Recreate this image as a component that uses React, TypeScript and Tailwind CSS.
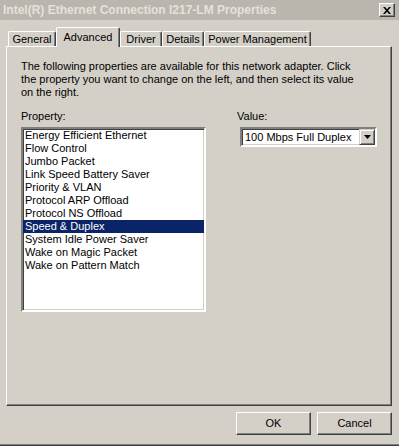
import React from "react";

const items = [
  "Energy Efficient Ethernet",
  "Flow Control",
  "Jumbo Packet",
  "Link Speed Battery Saver",
  "Priority & VLAN",
  "Protocol ARP Offload",
  "Protocol NS Offload",
  "Speed & Duplex",
  "System Idle Power Saver",
  "Wake on Magic Packet",
  "Wake on Pattern Match",
];

function Tab({ label, w, selected }: { label: string; w: string; selected?: boolean }) {
  if (selected) {
    return (
      <div
        className={`${w} h-[20px] mb-[-1px] relative z-10 bg-[#d4d0c8] border-t border-l border-white border-r border-r-[#404040] shadow-[inset_-1px_0_#808080] rounded-t-[2px] flex items-start justify-center pt-[3px] leading-[13px]`}
      >
        {label}
      </div>
    );
  }
  return (
    <div
      className={`${w} h-[15px] bg-[#d4d0c8] border-t border-l border-white border-r border-r-[#404040] shadow-[inset_-1px_0_#808080] rounded-t-[2px] flex items-start justify-center pt-[1px] leading-[13px]`}
    >
      {label}
    </div>
  );
}

export default function App() {
  return (
    <div className="w-[399px] h-[446px] bg-[#d4d0c8] overflow-hidden flex flex-col text-[11px] text-black font-['Liberation_Sans',Arial,sans-serif]">
      {/* Title bar */}
      <div className="h-[20px] bg-[#bab6ae] flex items-center justify-between pl-[3px] pr-[4px]">
        <span className="font-bold text-[12px] text-[#e4e2dc] leading-[20px]">
          Intel(R) Ethernet Connection I217-LM Properties
        </span>
        <div className="w-[16px] h-[14px] bg-[#d4d0c8] border-t border-l border-white border-r border-b border-r-[#404040] border-b-[#404040] shadow-[inset_-1px_-1px_#808080] flex items-center justify-center">
          <svg width="8" height="7" viewBox="0 0 8 7">
            <path d="M0 0h2l2 2.3L6 0h2L5 3.5 8 7H6L4 4.7 2 7H0l3-3.5z" fill="#000" />
          </svg>
        </div>
      </div>

      {/* Tabs */}
      <div className="pt-[7px] pl-[8px] h-[26px] flex items-end">
        <Tab label="General" w="w-[48px]" />
        <Tab label="Advanced" w="w-[64px]" selected />
        <Tab label="Driver" w="w-[42px]" />
        <Tab label="Details" w="w-[42px]" />
        <Tab label="Power Management" w="w-[107px]" />
      </div>

      {/* Panel */}
      <div className="ml-[6px] w-[386px] h-[360px] border-t border-l border-white border-r border-b border-r-[#404040] border-b-[#404040] shadow-[inset_-1px_-1px_#808080] pl-[14px] pt-[13px]">
        <p className="leading-[13px]">
          The following properties are available for this network adapter. Click
          <br />
          the property you want to change on the left, and then select its value
          <br />
          on the right.
        </p>
        <div className="flex mt-[11px]">
          <div className="w-[185px] flex flex-col">
            <div className="leading-[13px]">Property:</div>
            <div className="mt-[4px] w-[185px] h-[185px] bg-white border-2 border-t-[#808080] border-l-[#808080] border-r-white border-b-white shadow-[inset_1px_1px_#404040,inset_-1px_-1px_#d4d0c8] overflow-hidden">
              {items.map((it) => (
                <div
                  key={it}
                  className={`h-[13px] leading-[13px] pl-[2px] ${
                    it === "Speed & Duplex" ? "bg-[#0a246a] text-white" : ""
                  }`}
                >
                  {it}
                </div>
              ))}
            </div>
          </div>
          <div className="ml-[31px] flex flex-col">
            <div className="leading-[13px]">Value:</div>
            <div className="mt-[4px] ml-[3px] w-[137px] h-[20px] bg-white border-2 border-t-[#808080] border-l-[#808080] border-r-white border-b-white shadow-[inset_1px_1px_#404040,inset_-1px_-1px_#d4d0c8] flex items-center">
              <span className="flex-1 pl-[3px] leading-[16px]">100 Mbps Full Duplex</span>
              <div className="w-[16px] h-[16px] bg-[#d4d0c8] border-t border-l border-t-[#d4d0c8] border-l-[#d4d0c8] border-r border-b border-r-[#404040] border-b-[#404040] shadow-[inset_1px_1px_white,inset_-1px_-1px_#808080] flex items-center justify-center">
                <svg width="7" height="4" viewBox="0 0 7 4">
                  <path d="M0 0h7L3.5 4z" fill="#000" />
                </svg>
              </div>
            </div>
          </div>
        </div>
      </div>

      {/* Buttons */}
      <div className="flex justify-end gap-[6px] pr-[7px] mt-[6px]">
        <button className="w-[75px] h-[23px] bg-[#d4d0c8] border-t border-l border-white border-r border-b border-r-[#404040] border-b-[#404040] shadow-[inset_-1px_-1px_#808080] text-[11px] leading-[13px]">
          OK
        </button>
        <button className="w-[75px] h-[23px] bg-[#d4d0c8] border-t border-l border-white border-r border-b border-r-[#404040] border-b-[#404040] shadow-[inset_-1px_-1px_#808080] text-[11px] leading-[13px]">
          Cancel
        </button>
      </div>

      <div className="mt-auto h-[2px] border-t border-t-[#808080] border-b border-b-[#404040]" />
    </div>
  );
}
